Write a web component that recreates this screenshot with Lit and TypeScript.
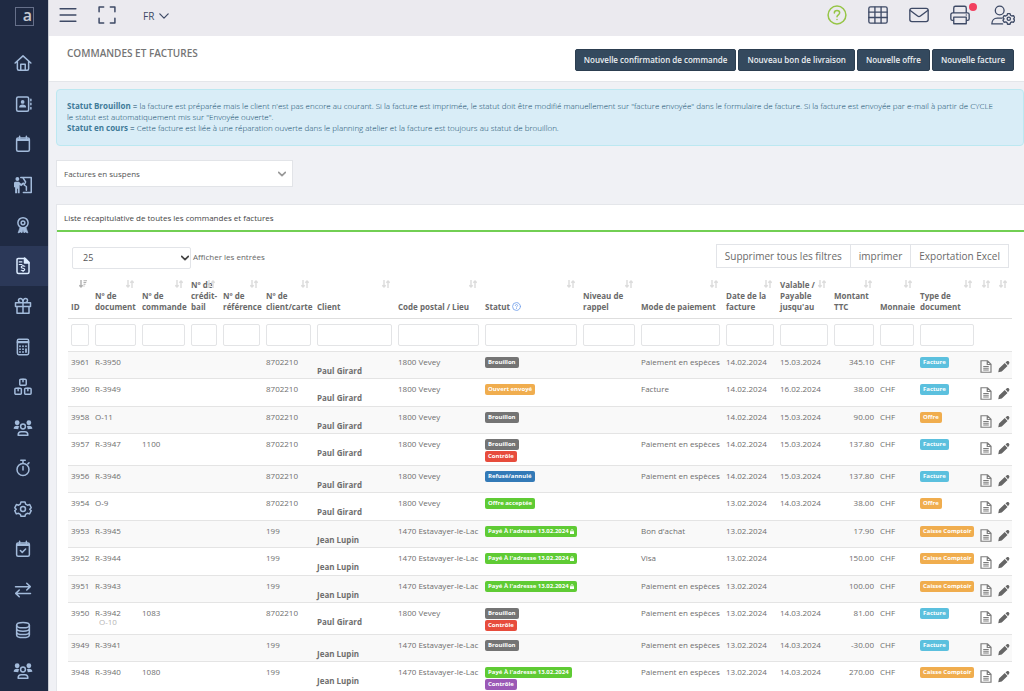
import { LitElement, html, css, svg, nothing } from "lit";
import { customElement, property, state } from "lit/decorators.js";
import { classMap } from "lit/directives/class-map.js";

const stroke = (body: unknown, width = 2, cls = "ico") => html`<svg
  class=${cls}
  viewBox="0 0 24 24"
  fill="none"
  stroke="currentColor"
  stroke-width=${width}
  stroke-linecap="round"
  stroke-linejoin="round"
  aria-hidden="true"
>${body}</svg>`;

const people = svg`<g fill="currentColor" stroke="none">
    <circle cx="4.2" cy="5" r="3.200"/><circle cx="19.8" cy="5" r="3.200"/>
    <path d="M-.5 13C-.5 10.300 1.500 9 4 9c1.200 0 2.200.4 3 1-.9 1-1.300 2.100-1.300 3.700zM24.500 13c0-2.700-2-4-4.500-4-1.200 0-2.200.4-3 1 .9 1 1.300 2.100 1.300 3.700z"/>
  </g>
  <circle cx="12" cy="10" r="3.200"/>
  <path d="M5.500 21.500c0-3 2-4.500 4-4.500h5c2 0 4 1.500 4 4.500z"/>`;

const box = (x: number, y: number) => svg`<g transform="translate(${x} ${y})">
  <rect x="0" y="0" width="8.600" height="8.200" rx="1.400"/><path d="M4.300 0v3.400"/></g>`;

const NAV: { label: string; icon: unknown }[] = [
  { label: "Accueil", icon: svg`<path d="M1.500 12 12 2.500 22.500 12M4.500 10v9.500a2 2 0 0 0 2 2h11a2 2 0 0 0 2-2V10M9 21v-7.500h6V21"/>` },
  { label: "Contacts", icon: svg`<rect x="3.500" y="2.500" width="16" height="19" rx="2"/><path d="M22.500 5.500v2M22.500 11v2M22.500 16.500v2"/><g fill="currentColor" stroke="none"><circle cx="11.500" cy="9.200" r="2.500"/><path d="M6.800 16.500c0-2.600 2-3.700 4.700-3.700s4.700 1.100 4.700 3.700z"/></g>` },
  { label: "Agenda", icon: svg`<rect x="3.500" y="4" width="17" height="17.500" rx="2"/><path d="M7.500 1.500v3M16.500 1.500v3"/><path d="M3.500 5h17v3h-17z" fill="currentColor" stroke="none"/>` },
  { label: "Atelier", icon: svg`<g fill="currentColor" stroke="none"><circle cx="4.500" cy="4" r="2.600"/><path d="M1.500 7.500h5l3 2.800 3-2 1.500 2-4.500 3.200-2-1.500V23H5.300v-6h-1v6H1.500v-8H0V9.500a2 2 0 0 1 1.500-2z"/></g><path d="M9 2h14v20H12.500M12 2.500l3.500 5.500-2 4 3 2v5"/>` },
  { label: "Récompenses", icon: svg`<circle cx="12" cy="9" r="6.800"/><circle cx="12" cy="9" r="2.500"/><path d="m8 15.500-2.500 7 3.500-1.300 1.600 1.300 1.400-4.500 1.400 4.500 1.600-1.300 3.500 1.300-2.500-7" fill="currentColor" stroke-width="1"/>` },
  { label: "Commandes et factures", icon: svg`<path d="M5.500 2h9.500l5 5v13a2 2 0 0 1-2 2H6a2 2 0 0 1-2-2V3.500A1.500 1.500 0 0 1 5.500 2z"/><path d="M14 1.500V8h6z" fill="currentColor"/><path d="M7 6.500h3.500M7 10h3.500" stroke-width="1.600"/><path d="M14.300 12.300c-3-.9-4.600-.3-4.600 1.200 0 2 4.600 1.100 4.600 3.200 0 1.500-2.200 1.900-4.600 1M12 11v1M12 18v1.200" stroke-width="1.600"/>` },
  { label: "Bons", icon: svg`<path d="M2 7.500h20v5H2zM4 12.500h16v9H4zM12 7.500v14M12 7.500C7 7.500 6 6 6 4.500S7.200 2 8.500 2C10.500 2 12 4.500 12 7.500zM12 7.500c5 0 6-1.500 6-3S16.800 2 15.500 2C13.500 2 12 4.500 12 7.500z"/>` },
  { label: "Caisse", icon: svg`<rect x="4.500" y="1.800" width="15" height="20.400" rx="1.800"/><path d="M5 5.500h14" stroke-width="3"/><path d="M8 11v.1M12 11v.1M16 11v.1M8 14.800v.1M12 14.800v.1M8 18.600v.1M12 18.600v.1M16 14.800v3.900" stroke-width="2.400"/>` },
  { label: "Stock", icon: svg`${box(7.7, 1.5)}${box(1.2, 13.6)}${box(14.2, 13.6)}` },
  { label: "Clients", icon: people },
  { label: "Chronomètre", icon: svg`<circle cx="12" cy="14" r="8"/><path d="M9 1.800h6M12 2v3M12 10v4.500M18.500 6.500l1.500-1.500"/>` },
  { label: "Paramètres", icon: svg`<circle cx="12" cy="12" r="3.300"/><path d="M9.300 2.500h5.400l.8 3 2.500 1.400 3-.8 2 4.200-2 2 2 2-2.300 4.200-3-.8-2.400 1.400-.7 2.700H9.300l-.8-2.700-2.400-1.400-3 .8L1 14.300l2-2-2-2 2.200-4.200 2.900.8 2.400-1.400z"/>` },
  { label: "Tâches", icon: svg`<rect x="3.500" y="4" width="17" height="17.500" rx="2"/><path d="M7.500 1.500v3M16.500 1.500v3M8.500 14l2.500 2.500 4.500-4.500"/><path d="M3.500 5h17v3h-17z" fill="currentColor" stroke="none"/>` },
  { label: "Échanges", icon: svg`<path d="M2 7.500h19.500M17 3l4.700 4.500L17 12M22 16.500H2.500M7 12l-4.700 4.500L7 21"/>` },
  { label: "Données", icon: svg`<ellipse cx="12" cy="5.500" rx="8.500" ry="3.500"/><path d="M3.500 5.500v13c0 2 3.800 3.500 8.500 3.500s8.500-1.500 8.500-3.500v-13M3.500 10c0 2 3.800 3.500 8.500 3.500s8.500-1.500 8.500-3.500M3.500 14.500c0 2 3.800 3.500 8.500 3.500s8.500-1.500 8.500-3.500"/>` },
  { label: "Équipe", icon: people },
];

type Tone = "grey" | "orange" | "red" | "blue" | "green" | "purple" | "cyan";
type Badge = { text: string; tone: Tone; lock?: boolean };

const DRAFT: Badge = { text: "Brouillon", tone: "grey" };
const CHECK: Badge = { text: "Contrôle", tone: "red" };
const PAID: Badge = { text: "Payé À l'adresse 13.02.2024", tone: "green", lock: true };
const INVOICE: Badge = { text: "Facture", tone: "cyan" };
const OFFER: Badge = { text: "Offre", tone: "orange" };
const COUNTER: Badge = { text: "Caisse Comptoir", tone: "orange" };

interface Row {
  id: number;
  doc: string;
  sub?: string;
  order?: string;
  card: string;
  client: string;
  place: string;
  status: Badge[];
  pay?: string;
  date: string;
  due?: string;
  total: string;
  type: Badge;
}

const PAUL = { card: "8702210", client: "Paul Girard", place: "1800 Vevey" };
const JEAN = { card: "199", client: "Jean Lupin", place: "1470 Estavayer-le-Lac" };
const CASH = "Paiement en espèces";

const ROWS: Row[] = [
  { id: 3961, doc: "R-3950", ...PAUL, status: [DRAFT], pay: CASH, date: "14.02.2024", due: "15.03.2024", total: "345.10", type: INVOICE },
  { id: 3960, doc: "R-3949", ...PAUL, status: [{ text: "Ouvert envoyé", tone: "orange" }], pay: "Facture", date: "14.02.2024", due: "16.02.2024", total: "38.00", type: INVOICE },
  { id: 3958, doc: "O-11", ...PAUL, status: [DRAFT], date: "14.02.2024", due: "15.03.2024", total: "90.00", type: OFFER },
  { id: 3957, doc: "R-3947", order: "1100", ...PAUL, status: [DRAFT, CHECK], pay: CASH, date: "14.02.2024", due: "15.03.2024", total: "137.80", type: INVOICE },
  { id: 3956, doc: "R-3946", ...PAUL, status: [{ text: "Refusé/annulé", tone: "blue" }], pay: CASH, date: "14.02.2024", due: "15.03.2024", total: "137.80", type: INVOICE },
  { id: 3954, doc: "O-9", ...PAUL, status: [{ text: "Offre acceptée", tone: "green" }], date: "13.02.2024", due: "14.03.2024", total: "38.00", type: OFFER },
  { id: 3953, doc: "R-3945", ...JEAN, status: [PAID], pay: "Bon d'achat", date: "13.02.2024", total: "17.90", type: COUNTER },
  { id: 3952, doc: "R-3944", ...JEAN, status: [PAID], pay: "Visa", date: "13.02.2024", total: "150.00", type: COUNTER },
  { id: 3951, doc: "R-3943", ...JEAN, status: [PAID], pay: CASH, date: "13.02.2024", total: "100.00", type: COUNTER },
  { id: 3950, doc: "R-3942", sub: "O-10", order: "1083", ...PAUL, status: [DRAFT, CHECK], pay: CASH, date: "13.02.2024", due: "14.03.2024", total: "81.00", type: INVOICE },
  { id: 3949, doc: "R-3941", ...JEAN, status: [DRAFT], pay: CASH, date: "13.02.2024", due: "14.03.2024", total: "-30.00", type: INVOICE },
  { id: 3948, doc: "R-3940", order: "1080", ...JEAN, status: [{ ...PAID, lock: false }, { text: "Contrôle", tone: "purple" }], pay: CASH, date: "13.02.2024", due: "14.03.2024", total: "270.00", type: COUNTER },
];

const COLUMNS: { lines: string[]; width: number }[] = [
  { lines: ["ID"], width: 24 },
  { lines: ["Nº de", "document"], width: 47 },
  { lines: ["Nº de", "commande"], width: 49 },
  { lines: ["Nº de", "crédit-", "bail"], width: 32 },
  { lines: ["Nº de", "référence"], width: 43 },
  { lines: ["Nº de", "client/carte"], width: 51 },
  { lines: ["Client"], width: 81 },
  { lines: ["Code postal / Lieu"], width: 87 },
  { lines: ["Statut"], width: 98 },
  { lines: ["Niveau de", "rappel"], width: 58 },
  { lines: ["Mode de paiement"], width: 85 },
  { lines: ["Date de la", "facture"], width: 54 },
  { lines: ["Valable /", "Payable", "jusqu'au"], width: 54 },
  { lines: ["Montant", "TTC"], width: 46 },
  { lines: ["Monnaie"], width: 40 },
  { lines: ["Type de", "document"], width: 60 },
  { lines: [], width: 18 },
  { lines: [], width: 17 },
];

const FONT = css`"Open Sans", "Noto Sans", sans-serif`;

@customElement("side-nav")
class SideNav extends LitElement {
  @property({ type: Number }) active = 5;

  static styles = css`
    :host { display: flex; flex-direction: column; width: 48px; height: 100vh; flex: none; background: #1f2a43; box-sizing: border-box; }
    ul { list-style: none; margin: 0; padding: 0; flex: 1; display: flex; flex-direction: column; }
    li { flex: 1; display: flex; }
    a { flex: 1; display: flex; align-items: center; justify-content: center; padding-right: 3px; color: #a3bbdb; text-decoration: none; }
    .logo { height: 43px; flex: none; align-items: flex-start; padding: 7px 0 0 1px; box-sizing: border-box; }
    .mark { box-sizing: border-box; width: 19px; height: 19px; border: 1px solid #66708a; color: #c6c9d2; font: 600 16px/15px ${FONT}; text-align: right; padding-right: 1px; }
    .on { background: #2b3858; color: #dcebff; }
    .ico { width: 18px; height: 18px; overflow: visible; }
  `;

  render() {
    return html`<a class="logo" href="#" aria-label="Accueil"><span class="mark">a</span></a>
      <ul>
        ${NAV.map((n, i) => html`<li><a href="#" class=${classMap({ on: i === this.active })} aria-label=${n.label}>${stroke(n.icon)}</a></li>`)}
      </ul>`;
  }
}

@customElement("top-bar")
class TopBar extends LitElement {
  static styles = css`
    :host { display: flex; align-items: center; justify-content: space-between; height: 36px; padding: 0 9px 6px 9px; box-sizing: border-box; background: #ebeaef; color: #3e4a66; }
    div { display: flex; align-items: center; }
    .left { gap: 19px; }
    .right { gap: 21px; }
    button { position: relative; border: 0; background: none; padding: 0; color: inherit; display: flex; align-items: center; gap: 5px; font: 400 10px/12px ${FONT}; }
    .lang { margin-left: 7px; padding-top: 2px; }
    .ico { width: 20px; height: 20px; }
    .wide { width: 24px; }
    .chev { width: 10px; height: 10px; }
    .help { color: #96c546; }
    .dot { position: absolute; right: -7px; top: -2px; width: 8px; height: 8px; border-radius: 50%; background: #f2405f; }
  `;

  render() {
    return html`<div class="left">
        <button aria-label="Menu">${stroke(svg`<path d="M2.500 4.500h19M2.500 12h19M2.500 19.500h19"/>`, 1.6)}</button>
        <button aria-label="Plein écran">${stroke(svg`<path d="M2.500 8V2.500H8M16 2.500h5.500V8M21.500 16v5.500H16M8 21.500H2.500V16"/>`, 1.8)}</button>
        <button class="lang">FR ${stroke(svg`<path d="m2 7 10 10L22 7"/>`, 3, "chev")}</button>
      </div>
      <div class="right">
        <button class="help" aria-label="Aide">${stroke(svg`<circle cx="12" cy="12" r="10.700"/><path d="M8.800 9.500c0-2 1.400-3 3.200-3s3.200 1.100 3.200 2.800c0 2.400-3.200 2.500-3.200 4.900M12 17.300v.2"/>`, 1.8)}</button>
        <button aria-label="Tableau">${stroke(svg`<rect x="1" y="2.300" width="22" height="19.400" rx="2"/><path d="M1 8.500h22M1 15h22M8.300 2.500v19M15.700 2.500v19"/>`, 1.6)}</button>
        <button aria-label="Messages">${stroke(svg`<rect x="1" y="4" width="22" height="16" rx="2.500"/><path d="m1.500 6.500 8.800 6.800c1 .8 2.400.8 3.400 0l8.800-6.800"/>`, 1.6)}</button>
        <button aria-label="Impressions">${stroke(svg`<path d="M4.500 9.500V3.500a2 2 0 0 1 2-2h11a2 2 0 0 1 2 2v6M4.500 18.500H3a2 2 0 0 1-2-2v-5a2 2 0 0 1 2-2h18a2 2 0 0 1 2 2v5a2 2 0 0 1-2 2h-1.500M4.500 14.500h15v8h-15zM19.500 12v.1"/>`, 1.6)}<span class="dot"></span></button>
        <button aria-label="Compte"><svg class="ico wide" viewBox="0 0 29 24" fill="none" stroke="currentColor" stroke-width="1.600" stroke-linecap="round" stroke-linejoin="round" aria-hidden="true">
          <circle cx="10.500" cy="6.500" r="5.300"/><path d="M14 22.800H1c0-4.500 3-7 6.500-7H13"/><circle cx="21.500" cy="16.500" r="2"/>
          <path d="M20 10.300h3l.6 2 1.600.9 2-.5 1.400 2.600-1.400 1.400 1.400 1.500-1.400 2.600-2-.5-1.600.9-.6 2h-3l-.6-2-1.600-.9-2 .5-1.400-2.600 1.400-1.500-1.400-1.400 1.400-2.600 2 .5 1.600-.9z"/></svg></button>
      </div>`;
  }
}

@customElement("status-badge")
class StatusBadge extends LitElement {
  @property() tone: Tone = "grey";
  @property({ type: Boolean }) lock = false;

  static styles = css`
    :host { display: flex; height: 12px; }
    span { display: flex; align-items: center; gap: 1px; height: 11px; box-sizing: border-box; padding: 0 3px; border-radius: 2px; color: #fff; font: 700 6px/11px ${FONT}; white-space: nowrap; }
    svg { width: 4px; height: 5px; }
    .grey { background: #747474; }
    .orange { background: #f0ad4e; }
    .red { background: #e74c3c; }
    .blue { background: #337ab7; }
    .green { background: #5fcb34; }
    .purple { background: #9b59b6; }
    .cyan { background: #5bc0de; }
  `;

  render() {
    return html`<span class=${this.tone}><slot></slot>${this.lock
      ? html`<svg viewBox="0 0 8 10" aria-hidden="true"><path d="M0 4.500h8V10H0z" fill="#fff"/><path d="M2 5V3a2 2 0 0 1 4 0v2" fill="none" stroke="#fff" stroke-width="1.500"/></svg>`
      : nothing}</span>`;
  }
}

const badge = (b: Badge) => html`<status-badge tone=${b.tone} ?lock=${b.lock}>${b.text}</status-badge>`;

const sortIcon = (sorted: boolean) => html`<svg class=${classMap({ sort: true, sorted })} viewBox="0 0 16 16" fill="none" stroke="currentColor" stroke-width="2.800" aria-hidden="true">
  <path d="M4 0v14M.6 10.600 4 14l3.400-3.400"/>
  ${sorted ? svg`<path d="M9 1.500h7M9 5h5.500M9 8.500h4M9 12h2" stroke-width="2.200"/>` : svg`<path d="M12 16V2M8.600 5.400 12 2l3.400 3.400"/>`}
</svg>`;

@customElement("invoice-table")
class InvoiceTable extends LitElement {
  static styles = css`
    :host { display: block; }
    table { width: 100%; table-layout: fixed; border-collapse: separate; border-spacing: 0; font: 400 8px/9px ${FONT}; color: #6e6e6e; }
    th, td { padding: 0 3px; text-align: left; box-sizing: border-box; white-space: nowrap; }
    .head th { position: relative; height: 39px; padding-bottom: 6px; vertical-align: bottom; border-bottom: 1px solid #dedede; font-weight: 700; line-height: 11px; color: #6a6a6a; }
    .filters td { height: 32px; vertical-align: middle; }
    .filters input { display: block; width: 100%; height: 22px; box-sizing: border-box; border: 1px solid #e3e4e6; border-radius: 2px; background: #fff; padding: 0 4px; font: inherit; color: inherit; }
    .sort { position: absolute; top: 1px; right: 5px; width: 8px; height: 8px; color: #dcdcdc; }
    .sorted { color: #b0b0b0; }
    .hint { width: 9px; height: 9px; color: #7ba6ec; vertical-align: -1px; }
    tbody td { height: 27px; padding-top: 5px; padding-bottom: 2px; vertical-align: top; border-top: 1px solid #e4e4e4; }
    tbody tr:nth-child(odd) td { background: #f9f9f9; }
    tbody tr:nth-child(even) td { height: 28px; }
    .num { text-align: right; }
    .sub { display: block; padding-left: 4px; color: #b5b5b5; }
    .name { display: block; padding-top: 9px; font-weight: 700; }
    button { display: block; border: 0; background: none; padding: 0; margin-top: 3px; color: #7c7c7c; }
    .act { width: 12px; height: 13px; display: block; }
    .pen { color: #666; }
  `;

  render() {
    return html`<table>
      <colgroup>${COLUMNS.map((c) => html`<col width=${c.width} />`)}</colgroup>
      <thead>
        <tr class="head">
          ${COLUMNS.map((c, i) => html`<th scope="col" aria-label=${c.lines.join(" ") || "Action"}>
            ${c.lines.map((l, k) => html`${k ? html`<br />` : nothing}${l}`)}
            ${c.lines[0] === "Statut" ? stroke(svg`<circle cx="12" cy="12" r="10.500"/><path d="M9 9.500c0-1.800 1.300-2.800 3-2.800s3 1 3 2.600c0 2.200-3 2.200-3 4.400M12 17.300v.2"/>`, 2.4, "hint") : nothing}
            ${sortIcon(i === 0)}</th>`)}
        </tr>
        <tr class="filters">
          ${COLUMNS.map((c) => html`<td>${c.lines.length ? html`<input type="text" aria-label=${"Filtrer " + c.lines.join(" ")} />` : nothing}</td>`)}
        </tr>
      </thead>
      <tbody>
        ${ROWS.map((r) => html`<tr>
          <td>${r.id}</td>
          <td>${r.doc}${r.sub ? html`<span class="sub">${r.sub}</span>` : nothing}</td>
          <td>${r.order}</td>
          <td></td>
          <td></td>
          <td>${r.card}</td>
          <td><span class="name">${r.client}</span></td>
          <td>${r.place}</td>
          <td>${r.status.map(badge)}</td>
          <td></td>
          <td>${r.pay}</td>
          <td>${r.date}</td>
          <td>${r.due}</td>
          <td class="num">${r.total}</td>
          <td>CHF</td>
          <td>${badge(r.type)}</td>
          <td><button aria-label="Ouvrir le document"><svg class="act" viewBox="0 0 24 26" fill="none" stroke="currentColor" stroke-width="2.400" aria-hidden="true"><path d="M2 1.500h13l7 7v16H2zM14.500 1.500V9H22M6.500 13h11M6.500 16.500h11M6.500 20h11"/></svg></button></td>
          <td><button aria-label="Modifier"><svg class="act pen" viewBox="0 0 24 26" fill="currentColor" aria-hidden="true"><path d="M.5 24.500 2 17 13.500 6l5.500 6.200L7.500 23.200zM15 4.700l3-2.200c1-.8 2.400-.7 3.300.2l1 1.100c.9 1 .8 2.400-.1 3.300l-2.100 3.600z"/></svg></button></td>
        </tr>`)}
      </tbody>
    </table>`;
  }
}

@customElement("app-root")
class AppRoot extends LitElement {
  @state() private actions = ["Nouvelle confirmation de commande", "Nouveau bon de livraison", "Nouvelle offre", "Nouvelle facture"];

  static styles = css`
    :host { display: flex; height: 100vh; overflow: hidden; background: #f0f1f5; font: 400 8px/11px ${FONT}; color: #666; }
    .page { flex: 1; min-width: 0; overflow: hidden auto; scrollbar-width: none; border-left: 1px solid #c9ccd4; box-sizing: border-box; }
    .title { display: flex; justify-content: space-between; align-items: flex-start; box-sizing: border-box; min-height: 46px; padding: 10px 10px 10px 18px; background: #fff; border-bottom: 1px solid #e4e6ea; }
    h1 { margin: 0; font-size: 10px; line-height: 14px; font-weight: 600; color: #757575; }
    .new { display: flex; gap: 2px; padding-top: 3px; }
    .new button { height: 22px; padding: 0 8px; border: 1px solid #2c3e50; border-radius: 2px; background: #34495e; color: #eceff2; font: 600 8px/12px ${FONT}; }
    .body { padding: 7px 0 0 7px; }
    .note { margin: 0 0 14px; padding: 10px 10px 12px; border: 1px solid #bce8f1; border-radius: 4px; background: #d9edf7; color: #0f4a6a; font-weight: 300; }
    .note p { margin: 0; }
    .note b { font-weight: 700; color: #3f7b99; }
    .pick { position: relative; width: 237px; margin-bottom: 17px; }
    select { appearance: none; display: block; width: 100%; box-sizing: border-box; border: 1px solid #e2e4e8; background: #fff; color: #555; font: 400 8px/12px ${FONT}; }
    .pick select { height: 27px; padding: 0 7px; }
    .chev { position: absolute; width: 8px; height: 8px; pointer-events: none; }
    .pick .chev { right: 7px; top: 10px; color: #999; }
    .panel { background: #fff; border: 1px solid #e4e6ea; border-right: 0; }
    h2 { margin: 0; padding: 7px; font-size: 8px; line-height: 11px; font-weight: 400; color: #444; border-bottom: 2px solid #72cf53; }
    .inner { padding: 12px 12px 8px 11px; }
    .tools { display: flex; justify-content: space-between; padding: 0 3px 10px 4px; }
    .len { display: flex; align-items: center; gap: 2px; }
    .len .wrap { position: relative; width: 119px; padding-top: 3px; }
    .len select { height: 22px; padding: 0 10px; border-radius: 2px; font-size: 9px; }
    .len .chev { right: 2px; top: 10px; color: #444; }
    .export { display: flex; }
    .export button { height: 24px; padding: 0 8px; border: 1px solid #e2e4e8; background: #fff; color: #6a6a6a; font: 400 10px/14px ${FONT}; }
    .export button + button { margin-left: -1px; }
  `;

  render() {
    const chevron = (cls = "chev") => stroke(svg`<path d="m2 7 10 10L22 7"/>`, 5, cls);
    return html`<side-nav .active=${5}></side-nav>
      <div class="page">
        <top-bar></top-bar>
        <header class="title">
          <h1>COMMANDES ET FACTURES</h1>
          <div class="new">${this.actions.map((a) => html`<button>${a}</button>`)}</div>
        </header>
        <main class="body">
          <div class="note">
            <p><b>Statut Brouillon</b> = la facture est préparée mais le client n'est pas encore au courant. Si la facture est imprimée, le statut doit être modifié manuellement sur "facture envoyée" dans le formulaire de facture. Si la facture est envoyée par e-mail à partir de CYCLE<br />le statut est automatiquement mis sur "Envoyée ouverte".</p>
            <p><b>Statut en cours</b> = Cette facture est liée à une réparation ouverte dans le planning atelier et la facture est toujours au statut de brouillon.</p>
          </div>
          <div class="pick">
            <select aria-label="Filtre des factures"><option>Factures en suspens</option></select>
            ${chevron()}
          </div>
          <section class="panel">
            <h2>Liste récapitulative de toutes les commandes et factures</h2>
            <div class="inner">
              <div class="tools">
                <div class="len">
                  <div class="wrap"><select id="len"><option>25</option></select>${chevron()}</div>
                  <label for="len">Afficher les entrées</label>
                </div>
                <div class="export"><button>Supprimer tous les filtres</button><button>imprimer</button><button>Exportation Excel</button></div>
              </div>
              <invoice-table></invoice-table>
            </div>
          </section>
        </main>
      </div>`;
  }
}
